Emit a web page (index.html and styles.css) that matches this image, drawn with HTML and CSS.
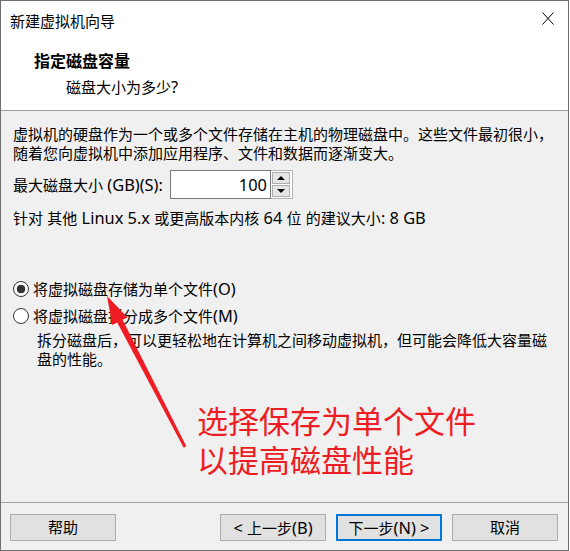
FILE: index.html
```html
<!DOCTYPE html>
<html lang="zh-CN">
<head>
<meta charset="utf-8">
<title>新建虚拟机向导</title>
<link rel="stylesheet" href="styles.css">
</head>
<body>
<div class="window">
  <div class="titlebar">
    <span class="title">新建虚拟机向导</span>
    <svg class="close" width="12" height="13" viewBox="0 0 12 13"><path d="M0.5 0.5 L11.5 12.5 M11.5 0.5 L0.5 12.5" stroke="#000" stroke-width="1" fill="none"/></svg>
  </div>
  <div class="header">
    <div class="h-title">指定磁盘容量</div>
    <div class="h-sub">磁盘大小为多少<span class="en">?</span></div>
  </div>
  <div class="content">
    <p class="para">虚拟机的硬盘作为一个或多个文件存储在主机的物理磁盘中。这些文件最初很小，<br>随着您向虚拟机中添加应用程序、文件和数据而逐渐变大。</p>
    <div class="size-row">
      <span class="label">最大磁盘大小<span class="en"> (GB)(S):</span></span>
      <div class="spin">
        <div class="spin-input"><span class="en">100</span></div>
        <div class="spin-btns">
          <div class="spin-btn"><span class="tri-up"></span></div>
          <div class="spin-btn"><span class="tri-down"></span></div>
        </div>
      </div>
    </div>
    <p class="info">针对<span class="en"> </span>其他<span class="en"> Linux 5.x </span>或更高版本内核<span class="en"> 64 </span>位<span class="en"> </span>的建议大小<span class="en">: 8 GB</span></p>
    <div class="radio-group">
      <div class="radio checked"><span class="dot"></span>将虚拟磁盘存储为单个文件<span class="en">(O)</span></div>
      <div class="radio"><span class="dot"></span>将虚拟磁盘拆分成多个文件<span class="en">(M)</span></div>
      <p class="desc">拆分磁盘后，可以更轻松地在计算机之间移动虚拟机，但可能会降低大容量磁<br>盘的性能。</p>
    </div>
  </div>
  <div class="footer">
    <button class="btn">帮助</button>
    <div class="spacer"></div>
    <button class="btn"><span class="en">&lt; </span>上一步<span class="en">(B)</span></button>
    <button class="btn default">下一步<span class="en">(N) &gt;</span></button>
    <button class="btn">取消</button>
  </div>
</div>
<svg class="arrow" width="570" height="551" viewBox="0 0 570 551">
  <polygon points="107,296 127.5,317.5 122.6,319.8 186.3,446.3 183.7,447.7 117.2,322.5 112.3,325" fill="#ef1c24"/>
</svg>
<div class="note">
  <div class="note-line">选择保存为单个文件</div>
  <div class="note-line">以提高磁盘性能</div>
</div>
</body>
</html>
```

FILE: styles.css
```css
html, body {
  margin: 0;
  padding: 0;
}

body {
  position: relative;
  width: 570px;
  height: 551px;
  background: #ffffff;
  font-family: "Noto Sans", "Noto Sans CJK SC", sans-serif;
  font-size: 15px;
  color: #000;
  overflow: hidden;
}

.en {
  font-size: 16.4px;
}

.window {
  width: 569px;
  height: 551px;
  box-sizing: border-box;
  border: 1px solid #6f6f6f;
  display: flex;
  flex-direction: column;
  background: #f0f0f0;
}

.titlebar {
  flex: none;
  height: 40px;
  background: #fff;
  display: flex;
  align-items: center;
  justify-content: space-between;
  padding: 0 14px 0 9px;
}

.title {
  line-height: 40px;
}

.close {
  margin-bottom: 5px;
}

.header {
  flex: none;
  height: 70px;
  box-sizing: border-box;
  background: #fff;
  border-bottom: 1px solid #a0a0a0;
  padding: 10px 0 0 33px;
}

.h-title {
  font-weight: bold;
  font-size: 16px;
  line-height: 20px;
}

.h-sub {
  margin-top: 6px;
  padding-left: 32px;
  line-height: 20px;
}

.content {
  flex: 1;
  padding: 14px 0 0 12px;
}

.para {
  margin: 0;
  line-height: 19px;
}

.size-row {
  display: flex;
  align-items: center;
  margin-top: 7px;
  height: 29px;
}

.label {
  width: 157px;
  line-height: 20px;
  white-space: nowrap;
}

.spin {
  display: flex;
  height: 29px;
}

.spin-input {
  width: 101px;
  height: 29px;
  box-sizing: border-box;
  border: 1px solid #7a7a7a;
  background: #fff;
  text-align: right;
  padding-right: 3px;
  line-height: 27px;
}

.spin-btns {
  width: 22px;
  height: 29px;
  box-sizing: border-box;
  border: 1px solid #b4b4b4;
  border-left: none;
  padding: 1px 2px 1px 1px;
  display: flex;
  flex-direction: column;
  gap: 1px;
  background: #fff;
}

.spin-btn {
  flex: 1;
  border: 1px solid #adadad;
  background: #e5e5e5;
  display: flex;
  align-items: center;
  justify-content: center;
}

.tri-up {
  width: 0;
  height: 0;
  border-left: 4px solid transparent;
  border-right: 4px solid transparent;
  border-bottom: 4px solid #000;
}

.tri-down {
  width: 0;
  height: 0;
  border-left: 4px solid transparent;
  border-right: 4px solid transparent;
  border-top: 4px solid #000;
}

.info {
  margin: 9px 0 0;
  line-height: 19px;
}

.radio-group {
  margin-top: 51px;
}

.radio {
  display: flex;
  align-items: center;
  height: 20px;
  line-height: 20px;
}

.radio + .radio {
  margin-top: 7px;
}

.dot {
  width: 16px;
  height: 16px;
  box-sizing: border-box;
  border: 1px solid #333;
  border-radius: 50%;
  background: #fff;
  margin-right: 4px;
  flex: none;
}

.radio.checked .dot {
  background: radial-gradient(circle, #333 0 4px, #fff 4.6px);
}

.desc {
  margin: 5px 0 0 24px;
  line-height: 19px;
}

.footer {
  flex: none;
  height: 48px;
  box-sizing: border-box;
  border-top: 1px solid #a0a0a0;
  display: flex;
  gap: 10px;
  padding: 11px 10px 0 9px;
}

.spacer {
  flex: 1;
}

.btn {
  width: 106px;
  height: 27px;
  box-sizing: border-box;
  border: 1px solid #adadad;
  background: #e1e1e1;
  font: inherit;
  color: #000;
  padding: 0;
  line-height: 25px;
}

.btn.default {
  border: 2px solid #0078d7;
  line-height: 23px;
}

.arrow {
  position: absolute;
  left: 0;
  top: 0;
  pointer-events: none;
}

.note {
  position: absolute;
  left: 197px;
  top: 400px;
  font-family: "Noto Sans CJK SC", sans-serif;
  font-size: 31px;
  color: #ee1d23;
}

.note-line {
  height: 39px;
  line-height: 39px;
}
```
